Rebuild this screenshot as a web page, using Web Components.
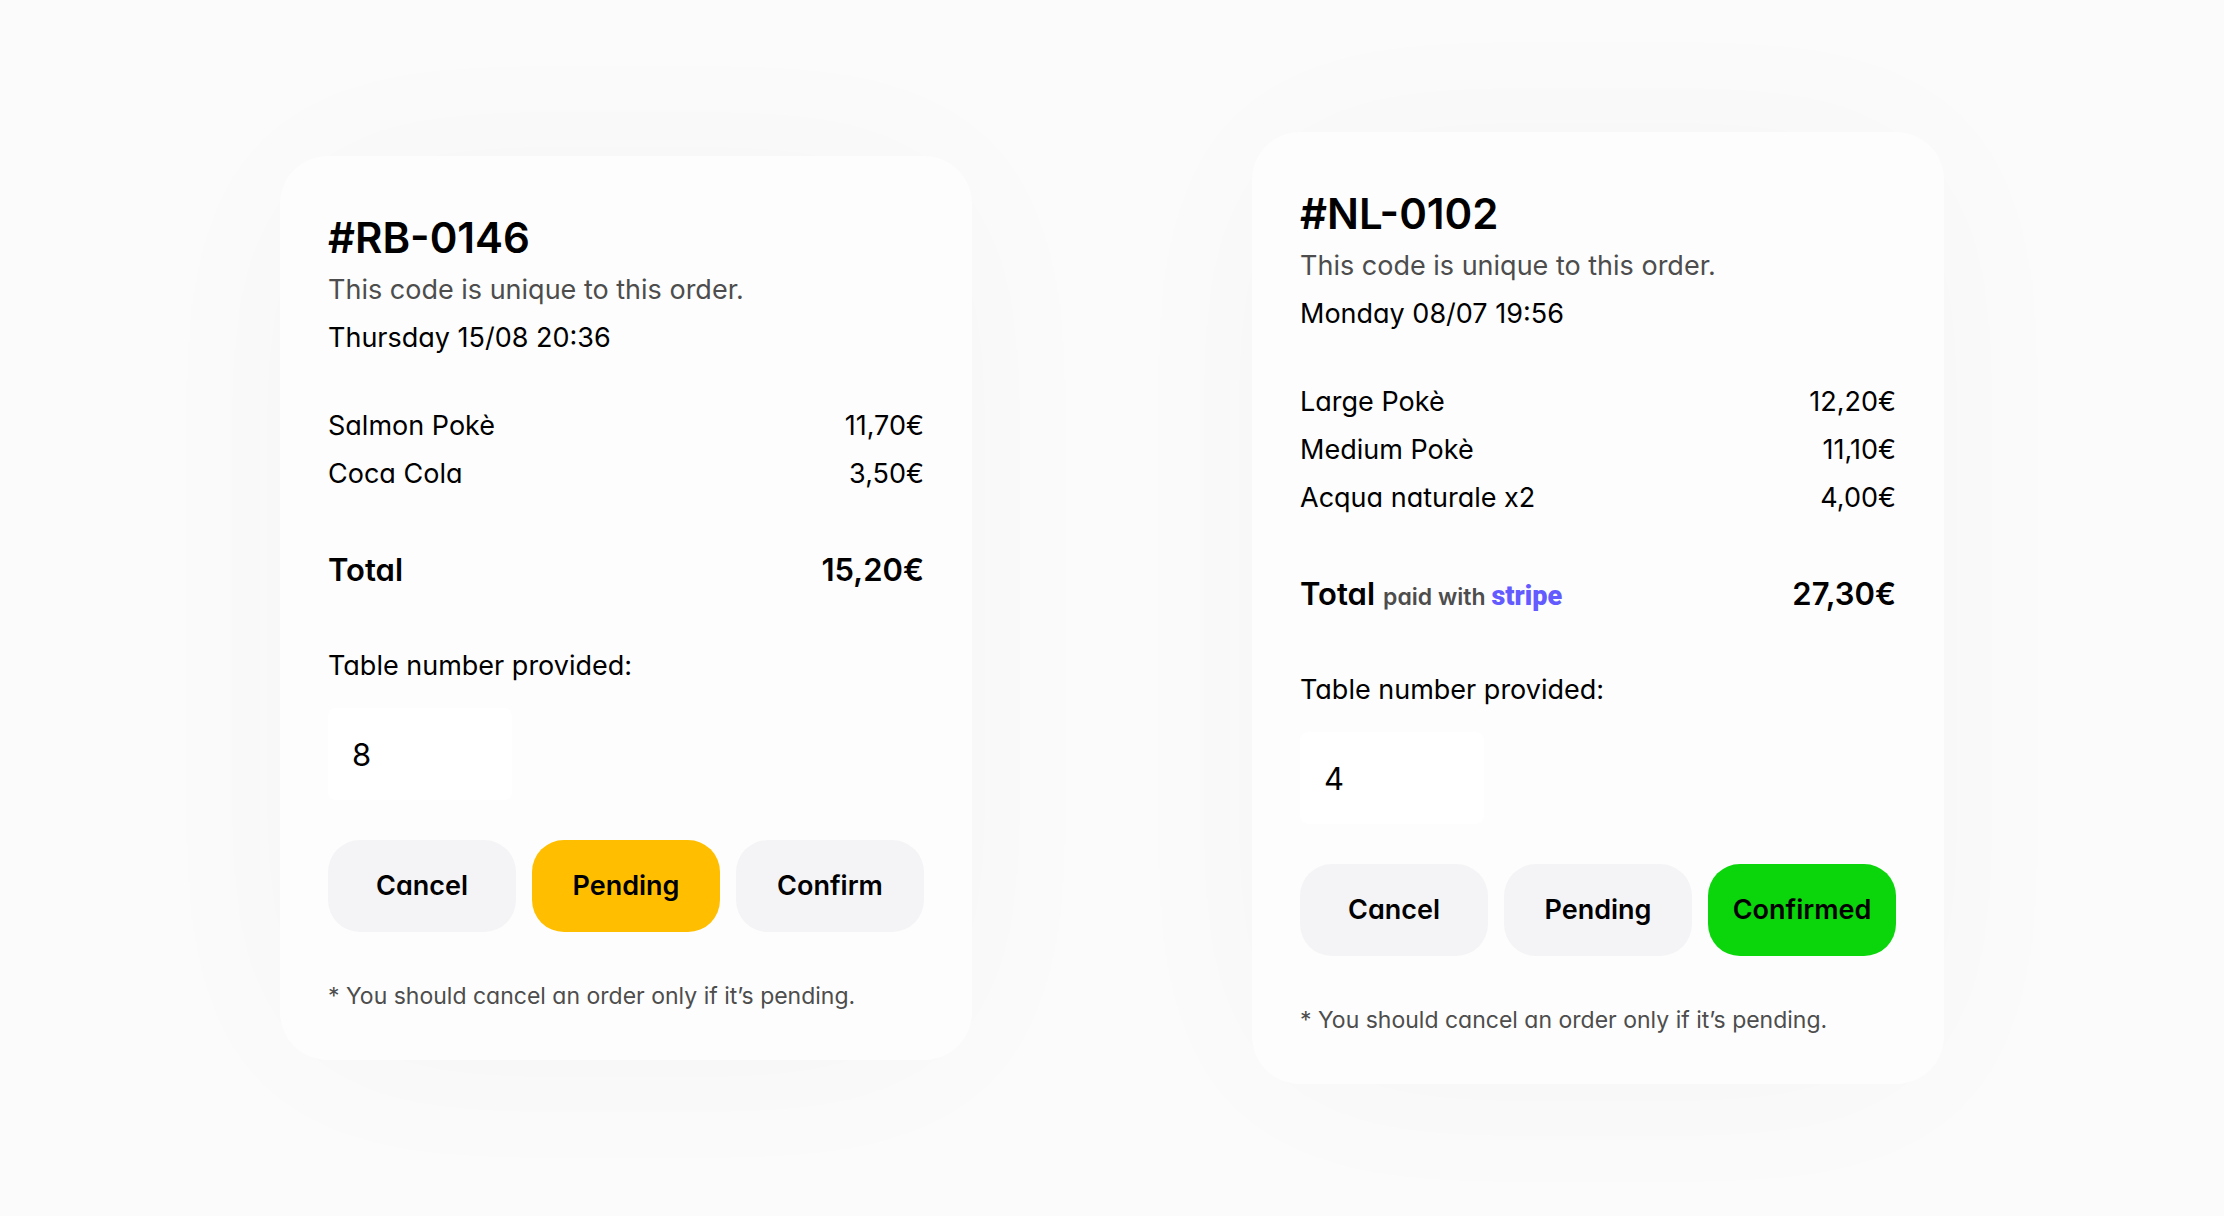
<!DOCTYPE html>
<html lang="en">
<head>
<meta charset="utf-8">
<meta name="viewport" content="width=device-width, initial-scale=1">
<title>Orders</title>
<style>
  body {
    margin: 0;
    background: #fbfbfb;
    color: #000;
    font-family: Inter, "Liberation Sans", sans-serif;
    font-size: 27px;
    line-height: 48px;
    font-feature-settings: "cv11";
  }
</style>
</head>
<body>
<order-board>
  <order-card>
    <order-heading slot="heading" code="#RB-0146">Thursday 15/08 20:36</order-heading>
    <order-items slot="items" items='[["Salmon Pokè","11,70€"],["Coca Cola","3,50€"]]'></order-items>
    <order-total slot="total" amount="15,20€">Total</order-total>
    <table-number slot="table" value="8"></table-number>
    <order-actions slot="actions" options="Cancel,Pending,Confirm" selected="Pending"></order-actions>
  </order-card>
  <order-card>
    <order-heading slot="heading" code="#NL-0102">Monday 08/07 19:56</order-heading>
    <order-items slot="items" items='[["Large Pokè","12,20€"],["Medium Pokè","11,10€"],["Acqua naturale x2","4,00€"]]'></order-items>
    <order-total slot="total" amount="27,30€">Total <paid-with slot="payment">stripe</paid-with></order-total>
    <table-number slot="table" value="4"></table-number>
    <order-actions slot="actions" options="Cancel,Pending,Confirmed" selected="Confirmed"></order-actions>
  </order-card>
</order-board>

<script>
class BaseElement extends HTMLElement {
  connectedCallback() {
    if (this.shadowRoot) return;
    this.attachShadow({ mode: "open" }).innerHTML = this.render();
  }
}

customElements.define("order-board", class extends BaseElement {
  render() {
    return `
      <style>
        :host { display: block; }
        main {
          box-sizing: border-box;
          min-height: 100vh;
          padding: 48px;
          display: flex;
          flex-wrap: wrap;
          align-items: center;
          justify-content: center;
          gap: 48px 280px;
        }
      </style>
      <main><slot></slot></main>`;
  }
});

customElements.define("order-card", class extends BaseElement {
  render() {
    return `
      <style>
        :host { display: block; flex: 0 1 692px; min-width: 0; }
        article {
          display: flex;
          flex-direction: column;
          padding: 54px 48px 40px;
          border-radius: 48px;
          background: #fdfdfd;
          box-shadow: 0 4px 200px -20px rgba(0, 0, 0, 0.03);
        }
        .total { margin: 48px 0; }
        .items, .actions, .note { margin-top: 40px; }
        .note { margin-bottom: 0; color: #4d4d4d; font-size: 23px; }
      </style>
      <article>
        <slot name="heading"></slot>
        <div class="items"><slot name="items"></slot></div>
        <div class="total"><slot name="total"></slot></div>
        <slot name="table"></slot>
        <div class="actions"><slot name="actions"></slot></div>
        <p class="note">* You should cancel an order only if it’s pending.</p>
      </article>`;
  }
});

customElements.define("order-heading", class extends BaseElement {
  render() {
    return `
      <style>
        :host { display: block; }
        h2, p { margin: 0; }
        h2 { font-size: 42px; font-weight: 600; line-height: 56px; }
        .hint { color: #4d4d4d; }
      </style>
      <h2>${this.getAttribute("code")}</h2>
      <p class="hint">This code is unique to this order.</p>
      <p><slot></slot></p>`;
  }
});

customElements.define("order-items", class extends BaseElement {
  render() {
    const rows = JSON.parse(this.getAttribute("items"))
      .map(([name, price]) => `<tr><th scope="row">${name}</th><td>${price}</td></tr>`)
      .join("");
    return `
      <style>
        :host { display: block; }
        table { width: 100%; border-collapse: collapse; }
        th, td { padding: 0; font-weight: 400; text-align: left; }
        td { text-align: right; }
      </style>
      <table><tbody>${rows}</tbody></table>`;
  }
});

customElements.define("order-total", class extends BaseElement {
  render() {
    return `
      <style>
        :host { display: flex; justify-content: space-between; align-items: baseline; font-size: 31px; font-weight: 600; }
        .label { display: flex; align-items: baseline; gap: 8px; }
      </style>
      <span class="label"><span><slot></slot></span><slot name="payment"></slot></span>
      <span>${this.getAttribute("amount")}</span>`;
  }
});

customElements.define("paid-with", class extends BaseElement {
  render() {
    return `
      <style>
        :host { display: flex; align-items: baseline; gap: 6px; font-size: 23px; line-height: 32px; color: #4d4d4d; }
        .brand { color: #635bff; font-family: Roboto, "Open Sans", sans-serif; font-size: 27px; font-weight: 900; }
      </style>
      <span>paid with</span><span class="brand"><slot></slot></span>`;
  }
});

customElements.define("table-number", class extends BaseElement {
  render() {
    return `
      <style>
        :host { display: flex; flex-direction: column; align-items: flex-start; gap: 18px; }
        input {
          box-sizing: border-box;
          width: 184px;
          height: 92px;
          padding: 0 24px;
          border: 0;
          border-radius: 8px;
          background: #fff;
          color: inherit;
          font: inherit;
          font-size: 31px;
        }
      </style>
      <label for="number">Table number provided:</label>
      <input id="number" type="text" inputmode="numeric" value="${this.getAttribute("value")}">`;
  }
});

customElements.define("order-actions", class extends BaseElement {
  render() {
    const selected = this.getAttribute("selected");
    const buttons = this.getAttribute("options").split(",")
      .map(o => `<button type="button" class="${o.toLowerCase()}" aria-pressed="${o === selected}">${o}</button>`)
      .join("");
    return `
      <style>
        :host { display: grid; grid-template-columns: repeat(3, minmax(0, 1fr)); gap: 16px; }
        button {
          height: 92px;
          padding: 0;
          border: 0;
          border-radius: 32px;
          background: #f4f4f6;
          color: #000;
          font: inherit;
          font-weight: 600;
          font-feature-settings: inherit;
          cursor: pointer;
        }
        .pending[aria-pressed="true"] { background: #ffbf00; }
        .confirmed[aria-pressed="true"] { background: #0bd50b; }
      </style>
      ${buttons}`;
  }
});
</script>
</body>
</html>
